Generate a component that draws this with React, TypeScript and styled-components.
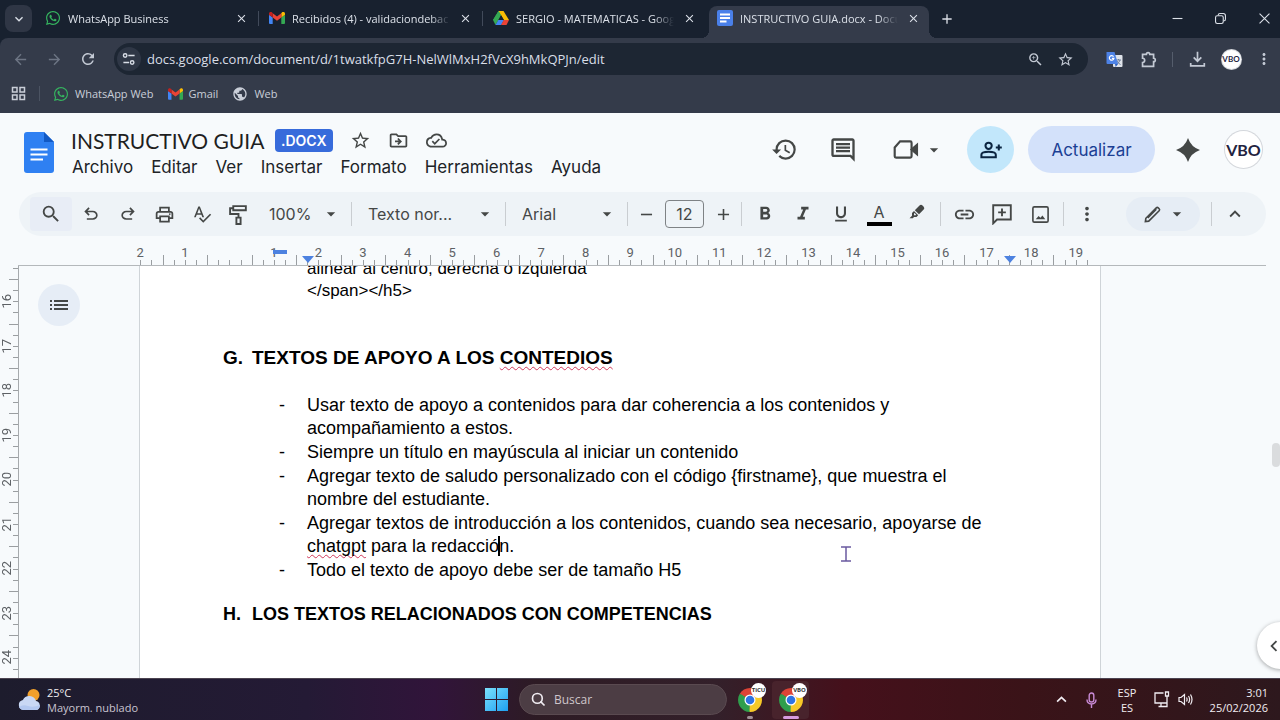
import React from "react";
import styled, { createGlobalStyle, css } from "styled-components";
import {
  MdHistory, MdOutlineInsertComment, MdSearch, MdOutlinePrint, MdSpellcheck,
  MdFormatBold, MdFormatItalic, MdFormatUnderlined, MdLink,
  MdMoreVert, MdExpandLess, MdStarBorder, MdOutlineDriveFileMove,
  MdOutlineCloudDone, MdZoomIn, MdRefresh, MdArrowBack, MdArrowForward, MdClose, MdAdd,
  MdRemove, MdArrowDropDown, MdExpandMore, MdPublic, MdChevronLeft,
} from "react-icons/md";
import { FaWhatsapp } from "react-icons/fa";

const ui = `"Open Sans", "Noto Sans", sans-serif`;
const docsUi = `Inter, Roboto, sans-serif`;
const paper = `"Liberation Sans", Arial, sans-serif`;

const Global = createGlobalStyle`
  * { box-sizing: border-box; }
  body { margin: 0; background: #f7fafc; font-family: ${ui}; }
  button { border: 0; background: none; padding: 0; margin: 0; font: inherit; color: inherit; display: inline-flex; align-items: center; justify-content: center; flex: none; }
  input, select { font: inherit; color: inherit; border: 0; background: none; padding: 0; margin: 0; outline: 0; min-width: 0; }
  a { color: inherit; text-decoration: none; }
  svg { display: block; flex: none; }
`;

const Screen = styled.div`
  min-height: 100vh;
  display: flex;
  flex-direction: column;
  overflow: hidden;
`;

/* ---------- browser chrome ---------- */
const Browser = styled.header`
  background: #18212f;
  color: #dbe0e8;
`;
const TabStrip = styled.div`
  height: 38px;
  display: flex;
  align-items: stretch;
  padding-left: 5px;
`;
const TabSearch = styled.button`
  width: 27px;
  height: 27px;
  margin: 5px 5px 0 0;
  border-radius: 8px;
  background: #2f3645;
`;
const Tabs = styled.div`
  display: flex;
  gap: 4px;
  flex: 0 1 892px;
  min-width: 0;
`;
const Tab = styled.div<{ $active?: boolean; $divider?: boolean }>`
  flex: 1 1 220px;
  min-width: 0;
  position: relative;
  display: flex;
  align-items: center;
  gap: 7px;
  margin-top: 6px;
  padding: 0 8px 8px;
  border-radius: 8px 8px 0 0;
  font-size: 11px;
  ${(p) => p.$active && css`
    background: #343b4a;
    &::before, &::after {
      content: "";
      position: absolute;
      bottom: 0;
      width: 8px;
      height: 8px;
    }
    &::before { left: -8px; background: radial-gradient(circle at 0 0, transparent 8px, #343b4a 8px); }
    &::after { right: -8px; background: radial-gradient(circle at 100% 0, transparent 8px, #343b4a 8px); }
  `}
  ${(p) => p.$divider && css`
    &::after {
      content: "";
      position: absolute;
      right: -2px;
      top: 5px;
      width: 1px;
      height: 15px;
      background: #414a5a;
    }
  `}
`;
const TabTitle = styled.span`
  flex: 1;
  min-width: 0;
  white-space: nowrap;
  overflow: hidden;
  mask-image: linear-gradient(90deg, #000 calc(100% - 20px), transparent);
`;
const TabClose = styled.button`
  width: 16px;
  height: 16px;
`;
const NewTab = styled.button`
  width: 28px;
  height: 28px;
  margin: 5px 0 0 4px;
`;
const WindowControls = styled.div`
  margin-left: auto;
  display: flex;
`;
const WindowButton = styled.button`
  width: 43px;
  height: 37px;
  &:last-child { width: 38px; padding-left: 6px; }
`;
const NavBar = styled.div`
  height: 42px;
  display: flex;
  align-items: center;
  background: #343b4a;
  border-radius: 8px 0 0 0;
  padding-left: 3px;
`;
const NavButton = styled.button<{ $dim?: boolean; $narrow?: boolean }>`
  width: ${(p) => (p.$narrow ? 32 : 34)}px;
  height: 32px;
  color: ${(p) => (p.$dim ? "#6d7584" : "#c3c9d4")};
`;
const AddressBar = styled.div`
  flex: 1;
  min-width: 0;
  height: 32px;
  margin: 0 9px;
  padding: 0 8px 0 3px;
  border-radius: 16px;
  background: #1d2633;
  display: flex;
  align-items: center;
  color: #d9dee7;
`;
const SiteInfo = styled.button`
  width: 24px;
  height: 24px;
  border-radius: 12px;
  background: #2f3746;
`;
const Url = styled.input`
  flex: 1;
  margin-left: 6px;
  font-size: 13px;
`;
const BarIcon = styled.button`
  width: 30px;
  height: 28px;
  color: #c3c9d4;
`;
const Rule = styled.span<{ $h: number; $m: number; $c: string }>`
  flex: none;
  width: 1px;
  height: ${(p) => p.$h}px;
  margin: 0 ${(p) => p.$m}px;
  background: ${(p) => p.$c};
`;
const Bookmarks = styled.nav`
  height: 33px;
  display: flex;
  align-items: center;
  background: #343b4a;
  padding: 0 0 6px 11px;
  font-size: 11px;
  color: #c9ced8;
`;
const Bookmark = styled.a`
  display: flex;
  align-items: center;
  gap: 6px;
  margin-right: 14px;
`;

/* ---------- docs header ---------- */
const Header = styled.section`
  height: 79px;
  display: flex;
  align-items: flex-start;
  padding: 13px 18px 0 24px;
  color: #202327;
  font-family: ${docsUi};
`;
const Logo = styled.a`
  margin-top: 6px;
`;
const TitleBlock = styled.div`
  margin-left: 17px;
  flex: 1;
  min-width: 0;
`;
const TitleRow = styled.div`
  height: 28px;
  display: flex;
  align-items: center;
  color: #444746;
`;
const Title = styled.input`
  width: 196px;
  font-size: 21px;
  color: #1f1f1f;
  font-family: Lato, sans-serif;
`;
const Badge = styled.span`
  height: 23px;
  padding: 0 6px;
  margin: 0 9px 0 8px;
  border-radius: 4px;
  background: #376bdb;
  color: #fff;
  font-size: 14px;
  font-weight: 600;
  line-height: 23px;
`;
const TitleIcon = styled.button`
  width: 38px;
  height: 28px;
`;
const MenuBar = styled.nav`
  display: flex;
  gap: 18px;
  padding-left: 1px;
  font-size: 17px;
  line-height: 26px;
`;
const HeaderActions = styled.div`
  height: 47px;
  display: flex;
  align-items: center;
  color: #444746;
`;
const ActionIcon = styled.button<{ $w: number }>`
  width: ${(p) => p.$w}px;
  height: 40px;
`;
const MeetButton = styled(ActionIcon)`
  gap: 5px;
  padding-left: 13px;
`;
const GeminiButton = styled(ActionIcon)`
  padding-right: 4px;
`;
const Share = styled.button`
  width: 47px;
  height: 47px;
  margin: 0 14px 0 16px;
  border-radius: 50%;
  background: #c2e7fb;
  color: #0b2540;
`;
const Upgrade = styled.button`
  height: 47px;
  width: 127px;
  border-radius: 24px;
  background: #d3e1fa;
  color: #1b3f94;
  font-size: 17px;
`;
const Avatar = styled.button<{ $size: number; $font: number }>`
  width: ${(p) => p.$size}px;
  height: ${(p) => p.$size}px;
  border-radius: 50%;
  background: #fff;
  box-shadow: 0 0 0 1px #d4d7dc;
  color: #23233f;
  font-family: Lato, sans-serif;
  font-weight: 700;
  font-size: ${(p) => p.$font}px;
`;

/* ---------- toolbar ---------- */
const ToolBar = styled.section`
  height: 44px;
  margin: 0 14px 0 19px;
  padding: 0 12px 0 11px;
  border-radius: 22px;
  background: #eef3f7;
  display: flex;
  align-items: center;
  color: #444746;
  font-family: ${docsUi};
  font-size: 16px;
`;
const Tool = styled.button<{ $w?: number; $shaded?: boolean }>`
  width: ${(p) => p.$w ?? 38}px;
  height: 34px;
  border-radius: 4px;
  background: ${(p) => (p.$shaded ? "#e8edf6" : "none")};
`;
const Picker = styled.label<{ $w: number }>`
  position: relative;
  width: ${(p) => p.$w}px;
  flex: none;
  select {
    width: 100%;
    height: 34px;
    appearance: none;
    padding-left: 12px;
  }
  svg {
    position: absolute;
    right: 6px;
    top: 7px;
    pointer-events: none;
  }
`;
const SizeBox = styled.input`
  width: 39px;
  height: 28px;
  margin: 0 5px;
  border: 1px solid #7e8285;
  border-radius: 4px;
  text-align: center;
`;
const TextColor = styled.span`
  width: 25px;
  height: 24px;
  border-bottom: 4px solid #000;
  line-height: 20px;
`;
const ModeButton = styled.button`
  width: 74px;
  height: 34px;
  margin: 0 7px 0 auto;
  border-radius: 17px;
  background: #e6edf5;
  gap: 5px;
  padding-left: 3px;
`;

/* ---------- rulers ---------- */
const RulerRow = styled.div`
  height: 30px;
  margin: 0 14px -1px 18px;
  padding-left: 100px;
  border-bottom: 1px solid #b4b8bb;
  position: relative;
  z-index: 1;
`;
const Ruler = styled.div`
  width: 980px;
  height: 29px;
  display: grid;
  grid-template-columns: repeat(22, 1fr);
`;
const RulerCell = styled.div`
  display: flex;
  flex-direction: column;
  justify-content: flex-end;
  font-family: Roboto, sans-serif;
  font-size: 13px;
  line-height: 14px;
  text-align: center;
  color: #5d6165;
  &:first-child i:nth-child(-n + 2) { border-color: transparent; }
`;
const Ticks = styled.div`
  height: 10px;
  margin-top: -5px;
  display: flex;
  align-items: flex-end;
  i { flex: 1; height: 5px; border-left: 1px solid #9a9ea1; }
  i:first-child { height: 10px; }
`;
const Marker = styled.svg`
  position: absolute;
  bottom: 2px;
`;
const Workspace = styled.main`
  position: relative;
  flex: 1 1 0;
  min-height: 400px;
  display: flex;
  overflow: hidden;
`;
const SideRuler = styled.div`
  flex: none;
  width: 19px;
  border-right: 1px solid #a6aaad;
  padding-top: 3px;
`;
const SideRulerInner = styled.div`
  height: 412px;
  display: grid;
  grid-template-rows: 11px repeat(9, 1fr);
  font-family: Roboto, sans-serif;
  font-size: 13px;
  color: #5d6165;
`;
const SideCell = styled.div`
  display: flex;
  justify-content: space-between;
  align-items: stretch;
`;
const SideLabel = styled.span`
  writing-mode: vertical-rl;
  transform: rotate(180deg);
  text-align: center;
  line-height: 14px;
  width: 14px;
`;
const SideTicks = styled.div`
  width: 9px;
  margin-left: -5px;
  display: flex;
  flex-direction: column;
  align-items: flex-end;
  i { flex: 1; width: 5px; border-top: 1px solid #9a9ea1; }
  i:first-child { width: 9px; }
`;
const FirstTick = styled.i`
  width: 5px;
  height: 1px;
  background: #9a9ea1;
  margin-left: auto;
`;
const Gutter = styled.aside`
  flex: none;
  width: 120px;
  padding: 19px 0 0 19px;
`;
const Outline = styled.button`
  width: 42px;
  height: 42px;
  border-radius: 21px;
  background: #e6edf6;
`;
const Page = styled.article`
  position: relative;
  flex: none;
  width: 962px;
  padding: 0 83px;
  background: #fff;
  border: solid #cfd4d8;
  border-width: 0 1px;
  color: #000;
  font-family: ${paper};
  font-size: 18px;
`;
const Continued = styled.p`
  margin: -7px 0 0 84px;
  font-size: 17px;
  line-height: 22px;
`;
const Heading = styled.h2<{ $size: number; $top: number }>`
  margin: ${(p) => p.$top}px 0 0;
  display: flex;
  font-size: ${(p) => p.$size}px;
  line-height: 24px;
  white-space: pre;
  span:first-child { width: 29px; }
`;
const List = styled.ul`
  list-style: none;
  margin: 24px 0 0;
  padding: 0 0 0 56px;
  line-height: 23px;
`;
const Item = styled.li`
  display: flex;
  margin-bottom: 1px;
  white-space: nowrap;
  &::before { content: "-"; width: 28px; flex: none; }
`;
const Typo = styled.u`
  text-decoration: underline wavy #d0385a 1px;
  text-underline-offset: 2px;
  text-decoration-skip-ink: none;
`;
const Caret = styled.span`
  display: inline-block;
  width: 2px;
  height: 20px;
  margin: 0 -1px;
  background: #000;
  vertical-align: -4px;
`;
const Pointer = styled.svg`
  position: absolute;
  left: 701px;
  top: 281px;
`;
const ScrollThumb = styled.span`
  position: absolute;
  right: 0;
  top: 178px;
  width: 8px;
  height: 24px;
  border-radius: 4px;
  background: #dadcde;
`;
const PanelToggle = styled.button`
  position: absolute;
  right: -24px;
  bottom: 9px;
  width: 47px;
  height: 47px;
  border-radius: 50%;
  background: #fff;
  box-shadow: 0 1px 4px rgba(0, 0, 0, 0.35);
  color: #444746;
  justify-content: flex-start;
  padding-left: 6px;
`;

/* ---------- taskbar ---------- */
const TaskBar = styled.footer`
  height: 42px;
  padding: 0 4px 0 18px;
  display: grid;
  grid-template-columns: 1fr auto 1fr;
  align-items: center;
  border-top: 1px solid #4b4350;
  background: linear-gradient(90deg, #1d1c2d 0%, #241a35 24%, #31143a 34%, #2d1b24 42%, #33202a 56%, #45101b 66%, #3a1318 80%, #2d181d 100%);
  color: #f1edf2;
  font-size: 12px;
  line-height: 15px;
`;
const Weather = styled.button`
  justify-self: start;
  gap: 6px;
  text-align: left;
  font-size: 11px;
  small { display: block; font-size: 11px; color: #c9c4d0; }
`;
const Center = styled.div`
  display: flex;
  align-items: center;
  height: 41px;
`;
const SearchBox = styled.label`
  width: 208px;
  height: 31px;
  margin: 0 4px 0 11px;
  padding-left: 11px;
  border-radius: 16px;
  background: #4c3d44;
  border: 1px solid #5a4a50;
  display: flex;
  align-items: center;
  gap: 8px;
  input { width: 150px; }
  input::placeholder { color: #cfc6ca; opacity: 1; }
`;
const TaskApp = styled.button<{ $active?: boolean }>`
  position: relative;
  width: 37px;
  height: 38px;
  margin-left: ${(p) => (p.$active ? 4 : 0)}px;
  border-radius: 4px;
  background: ${(p) => (p.$active ? "#48232c" : "none")};
  &::after {
    content: "";
    position: absolute;
    bottom: 0;
    left: calc(50% - ${(p) => (p.$active ? 8 : 3)}px);
    width: ${(p) => (p.$active ? 16 : 6)}px;
    height: 3px;
    border-radius: 2px;
    background: ${(p) => (p.$active ? "#d79be0" : "#a08f95")};
  }
`;
const AppBadge = styled.span`
  position: absolute;
  top: 2px;
  right: 2px;
  width: 15px;
  height: 15px;
  border-radius: 8px;
  background: #fff;
  color: #333;
  font-size: 6px;
  line-height: 15px;
  font-weight: 700;
`;
const Tray = styled.div`
  justify-self: end;
  display: flex;
  align-items: center;
  padding-right: 8px;
  font-size: 11px;
`;
const TrayButton = styled.button<{ $w: number; $right?: boolean }>`
  width: ${(p) => p.$w}px;
  text-align: ${(p) => (p.$right ? "right" : "center")};
  justify-content: ${(p) => (p.$right ? "flex-end" : "center")};
`;

/* ---------- drawings ---------- */
const GmailIcon = ({ w = 16 }: { w?: number }) => (
  <svg width={w} height="12" viewBox="0 0 16 12">
    <path d="M1 12h2.700V5.500L0 2.800V11q0 1 1 1z" fill="#4285f4" />
    <path d="M12.300 12H15q1 0 1-1V2.800l-3.700 2.700z" fill="#34a853" />
    <path d="M12.300 1.200v4.300L16 2.800V1.700C16 .2 14.300-.6 13.100.3z" fill="#fbbc04" />
    <path d="M3.700 5.500V1.200L8 4.400l4.300-3.200v4.300L8 8.700z" fill="#ea4335" />
    <path d="M0 1.700v1.100l3.700 2.700V1.200L2.900.3C1.700-.6 0 .2 0 1.700z" fill="#c5221f" />
  </svg>
);
const DriveIcon = () => (
  <svg width="16" height="14" viewBox="0 0 16 14">
    <path d="M5.500 0h5l-5.300 9H0z" fill="#34a853" />
    <path d="M10.500 0L16 9h-5L5.500 0z" fill="#fbbc04" />
    <path d="M0 9l2.500 5 3-5L8 4.200 5.500 0z" fill="#34a853" />
    <path d="M5.300 9H11l-2.800 5H2.500z" fill="#4285f4" />
    <path d="M10.700 9H16l-2.500 5H8z" fill="#ea4335" />
    <path d="M8 4.300L10.700 9H5.300z" fill="#18212f" />
  </svg>
);
const DocsTabIcon = () => (
  <svg width="16" height="16" viewBox="0 0 16 16">
    <rect width="16" height="16" rx="2" fill="#4a80ea" />
    <path d="M3 4.500h10M3 8h10M3 11.500h6.500" stroke="#fff" strokeWidth="1.800" />
  </svg>
);
const DocsLogo = () => (
  <svg width="30" height="41" viewBox="0 0 30 41">
    <path d="M3 0h17l10 10v28q0 3-3 3H3q-3 0-3-3V3q0-3 3-3z" fill="#2f80f2" />
    <path d="M20 0l10 10H20z" fill="#1259c4" />
    <path d="M6.500 17.500h17M6.500 22.500h17M6.500 27.500h12.500" stroke="#fff" strokeWidth="2.200" />
  </svg>
);
const Glyph = ({ d, size = 20 }: { d: string; size?: number }) => (
  <svg width={size} height={size} viewBox="0 -960 960 960" fill="currentColor"><path d={d} /></svg>
);
const UNDO = "M280-200v-80h284q63 0 109.500-40T720-420q0-60-46.500-100T564-560H312l104 104-56 56-200-200 200-200 56 56-104 104h252q97 0 166.500 63T800-420q0 94-69.500 157T564-200H280Z";
const REDO = "M396-200q-97 0-166.500-63T160-420q0-94 69.500-157T396-640h252L544-744l56-56 200 200-200 200-56-56 104-104H396q-63 0-109.500 40T240-420q0 60 46.500 100T396-280h284v80H396Z";
const Line = ({ d, size = 20, w = 2, children }: { d: string; size?: number; w?: number; children?: React.ReactNode }) => (
  <svg width={size} height={size} viewBox="0 0 20 20" fill="none" stroke="currentColor" strokeWidth={w}>
    <path d={d} />
    {children}
  </svg>
);
const TranslateIcon = () => (
  <svg width="17" height="17" viewBox="0 0 17 17">
    <rect x="7" y="4" width="9.500" height="12" rx="1" fill="#dfe3ea" />
    <path d="M10 9h5M12.500 8v1M14 9q-1 3-3.500 4.500M11 10q1 2.500 3.500 3.500" stroke="#6f7f9a" fill="none" />
    <path d="M1 1h7.500l3.500 12H1.500Q.5 13 .5 12V1.500z" fill="#4d82e6" />
    <path d="M7.600 5.600A2.300 2.300 0 1 0 7.900 7.400H5.900" stroke="#fff" strokeWidth="1.200" fill="none" />
    <path d="M9 13h3l-2.300 3z" fill="#2d5fc0" />
  </svg>
);
const ChromeIcon = () => (
  <svg width="24" height="24" viewBox="0 0 24 24">
    <path d="M12 12L1.610 6A12 12 0 0 1 22.390 6z" fill="#dd4336" />
    <path d="M12 12L22.390 6A12 12 0 0 1 12 24z" fill="#f7c928" />
    <path d="M12 12v12A12 12 0 0 1 1.610 6z" fill="#2f9e4c" />
    <path d="M12 6.500h10.650L12 12z" fill="#dd4336" />
    <path d="M16.760 14.750L11.500 24 12 12z" fill="#f7c928" />
    <path d="M7.240 14.750L1.900 5.500 12 12z" fill="#2f9e4c" />
    <circle cx="12" cy="12" r="5.500" fill="#fff" />
    <circle cx="12" cy="12" r="4.300" fill="#2f74e4" />
  </svg>
);
const WeatherIcon = () => (
  <svg width="23" height="24" viewBox="0 0 23 24">
    <circle cx="15.500" cy="7" r="6" fill="#f2a02b" />
    <path d="M5.500 22a5 5 0 0 1-.6-9.900A7 7 0 0 1 18 13a4.600 4.600 0 0 1 .3 9z" fill="#c9d8f4" />
    <path d="M1 19q4-3 9-1t12-1q-.5 5-4 5H5.500Q2.500 22 1 19z" fill="#b3c8f0" />
  </svg>
);
const WindowsLogo = () => (
  <svg width="23" height="23" viewBox="0 0 23 23">
    <defs><linearGradient id="win" x1="0" y1="0" x2="1" y2="1"><stop stopColor="#7be0fb" /><stop offset="1" stopColor="#1ea0f2" /></linearGradient></defs>
    <path d="M0 0h11v11H0zM12 0h11v11H12zM0 12h11v11H0zM12 12h11v11H12z" fill="url(#win)" />
  </svg>
);

const tabs = [
  { title: "WhatsApp Business", icon: <FaWhatsapp size={16} color="#35b45f" /> },
  { title: "Recibidos (4) - validaciondebac", icon: <GmailIcon /> },
  { title: "SERGIO - MATEMATICAS - Goog", icon: <DriveIcon /> },
  { title: "INSTRUCTIVO GUIA.docx - Docu", icon: <DocsTabIcon />, active: true },
];
const menus = ["Archivo", "Editar", "Ver", "Insertar", "Formato", "Herramientas", "Ayuda"];
const rulerLabels = ["2", "1", "", ...Array.from({ length: 19 }, (_, i) => String(i + 1))];
const sideLabels = ["16", "17", "18", "19", "20", "21", "22", "23", "24"];

const ToolRule = () => <Rule $h={24} $m={4} $c="#c9cdd1" />;
const FourTicks = () => (<><i /><i /><i /><i /></>);

export default function App() {
  return (
    <Screen>
      <Global />
      <Browser>
        <TabStrip>
          <TabSearch aria-label="Buscar pestañas"><MdExpandMore size={16} /></TabSearch>
          <Tabs>
            {tabs.map((t, i) => (
              <Tab key={t.title} $active={t.active} $divider={i < 2}>
                {t.icon}
                <TabTitle>{t.title}</TabTitle>
                <TabClose aria-label="Cerrar"><MdClose size={13} /></TabClose>
              </Tab>
            ))}
          </Tabs>
          <NewTab aria-label="Nueva pestaña"><MdAdd size={16} /></NewTab>
          <WindowControls>
            <WindowButton aria-label="Minimizar"><Line size={11} d="M1 10h18" /></WindowButton>
            <WindowButton aria-label="Restaurar">
              <Line size={11} w={2} d="M6 4V3q0-2 3-2h6q4 0 4 4v6q0 3-2 3h-1"><rect x="1" y="5" width="14" height="14" rx="3" /></Line>
            </WindowButton>
            <WindowButton aria-label="Cerrar ventana"><Line size={11} d="M1 1l18 18M19 1L1 19" /></WindowButton>
          </WindowControls>
        </TabStrip>
        <NavBar>
          <NavButton $dim aria-label="Atrás"><MdArrowBack size={17} /></NavButton>
          <NavButton $dim aria-label="Adelante"><MdArrowForward size={17} /></NavButton>
          <NavButton aria-label="Recargar"><MdRefresh size={18} /></NavButton>
          <AddressBar>
            <SiteInfo aria-label="Información del sitio">
              <Line size={14} w={2} d="M9 5h9M2 15h8"><circle cx="4.500" cy="5" r="2.500" /><circle cx="14.500" cy="15" r="2.500" /></Line>
            </SiteInfo>
            <Url aria-label="Dirección" defaultValue="docs.google.com/document/d/1twatkfpG7H-NelWlMxH2fVcX9hMkQPJn/edit" />
            <BarIcon aria-label="Zoom"><MdZoomIn size={17} /></BarIcon>
            <BarIcon aria-label="Añadir a marcadores"><MdStarBorder size={17} /></BarIcon>
          </AddressBar>
          <NavButton aria-label="Traducir"><TranslateIcon /></NavButton>
          <NavButton aria-label="Extensiones">
            <Line size={17} d="M3 4h4.500a2 2 0 0 1 4 0H16v4.500a2 2 0 0 1 0 4V18H3v-4.500a2.500 2.500 0 0 0 0-5z" />
          </NavButton>
          <Rule $h={15} $m={7} $c="#555d6c" />
          <NavButton aria-label="Descargas"><Line size={17} d="M10 1v11M5.500 7.500L10 12l4.500-4.500M2 14v3.500h16V14" /></NavButton>
          <NavButton aria-label="Perfil"><Avatar as="span" $size={19} $font={8}><AvatarText>VBO</AvatarText></Avatar></NavButton>
          <NavButton $narrow aria-label="Más"><MdMoreVert size={18} /></NavButton>
        </NavBar>
        <Bookmarks>
          <button aria-label="Grupos">
            <Line size={15} w={2} d="M2 2h6v6H2zM12 2h6v6h-6zM2 12h6v6H2zM12 12h6v6h-6z" />
          </button>
          <Rule $h={15} $m={13} $c="#4b5362" />
          <Bookmark href="#whatsapp"><FaWhatsapp size={16} color="#35b45f" />WhatsApp Web</Bookmark>
          <Bookmark href="#gmail"><GmailIcon w={15} />Gmail</Bookmark>
          <Bookmark href="#web"><MdPublic size={16} />Web</Bookmark>
        </Bookmarks>
      </Browser>

      <Header>
        <Logo href="#inicio" aria-label="Página principal de Documentos"><DocsLogo /></Logo>
        <TitleBlock>
          <TitleRow>
            <Title aria-label="Nombre del documento" defaultValue="INSTRUCTIVO GUIA" />
            <Badge>.DOCX</Badge>
            <TitleIcon aria-label="Destacar"><MdStarBorder size={21} /></TitleIcon>
            <TitleIcon aria-label="Mover"><MdOutlineDriveFileMove size={21} /></TitleIcon>
            <TitleIcon aria-label="Estado del documento"><MdOutlineCloudDone size={21} /></TitleIcon>
          </TitleRow>
          <MenuBar>{menus.map((m) => <button key={m}>{m}</button>)}</MenuBar>
        </TitleBlock>
        <HeaderActions>
          <ActionIcon $w={59} aria-label="Historial"><MdHistory size={27} /></ActionIcon>
          <ActionIcon $w={58} aria-label="Comentarios"><MdOutlineInsertComment size={28} /></ActionIcon>
          <MeetButton $w={79} aria-label="Videollamada">
            <Line size={27} w={1.600} d="M2 8.500L6 4h7.500q1 0 1 1v10q0 1-1 1H3q-1 0-1-1z"><path d="M14.500 10L18.500 6.500v7z" fill="currentColor" /></Line>
            <MdArrowDropDown size={20} />
          </MeetButton>
          <Share aria-label="Compartir">
            <Line size={24} w={1.700} d="M2 16v-2q0-2.500 6-2.500t6 2.500v2zM16.500 5.500v5M14 8h5"><circle cx="8" cy="6.500" r="2.600" /></Line>
          </Share>
          <Upgrade>Actualizar</Upgrade>
          <GeminiButton $w={70} aria-label="Gemini">
            <svg width="24" height="24" viewBox="0 0 24 24" fill="currentColor"><path d="M12 0q3 9 12 12-9 3-12 12-3-9-12-12Q9 9 12 0z" /></svg>
          </GeminiButton>
          <Avatar $size={37} $font={16} aria-label="Cuenta">VBO</Avatar>
        </HeaderActions>
      </Header>

      <ToolBar>
        <Tool $w={42} $shaded aria-label="Buscar"><MdSearch size={22} /></Tool>
        <Tool $w={37} aria-label="Deshacer"><Glyph d={UNDO} /></Tool>
        <Tool $w={37} aria-label="Rehacer"><Glyph d={REDO} /></Tool>
        <Tool $w={37} aria-label="Imprimir"><MdOutlinePrint size={21} /></Tool>
        <Tool $w={37} aria-label="Ortografía"><MdSpellcheck size={20} /></Tool>
        <Tool $w={37} aria-label="Copiar formato">
          <Line size={21} w={1.800} d="M5 2h12v4H5zM5 4H2v5.500h8V13"><path d="M8 13h4v6H8z" /></Line>
        </Tool>
        <Picker $w={90}><select aria-label="Zoom"><option>100%</option></select><MdArrowDropDown size={20} /></Picker>
        <ToolRule />
        <Picker $w={145}><select aria-label="Estilos"><option>Texto nor...</option></select><MdArrowDropDown size={20} /></Picker>
        <ToolRule />
        <Picker $w={113}><select aria-label="Fuente"><option>Arial</option></select><MdArrowDropDown size={20} /></Picker>
        <ToolRule />
        <Tool $w={28} aria-label="Reducir"><MdRemove size={19} /></Tool>
        <SizeBox aria-label="Tamaño de fuente" defaultValue="12" />
        <Tool $w={28} aria-label="Aumentar"><MdAdd size={19} /></Tool>
        <ToolRule />
        <Tool aria-label="Negrita"><MdFormatBold size={22} /></Tool>
        <Tool aria-label="Cursiva"><MdFormatItalic size={22} /></Tool>
        <Tool aria-label="Subrayado"><MdFormatUnderlined size={20} /></Tool>
        <Tool aria-label="Color del texto"><TextColor>A</TextColor></Tool>
        <Tool aria-label="Resaltar">
          <svg width="18" height="22" viewBox="0 0 18 22" fill="currentColor"><path d="M11.500 2.500Q13 1 14.500 2.500l1.200 1.200q1.300 1.400 0 2.800L11 11.200 6.800 7.200zM6 8l4.200 4.200L8.500 14H6l-1.200 1.200H1.500L4 12.700V10z" /><path d="M6 10.500v1.700h1.600l.6-.5-1.600-1.700z" fill="#eef3f7" /></svg>
        </Tool>
        <ToolRule />
        <Tool aria-label="Enlace"><MdLink size={23} /></Tool>
        <Tool aria-label="Añadir comentario">
          <Line size={22} w={1.700} d="M2 18.500V2h16v13H5.500zM10 5v7M6.500 8.500h7" />
        </Tool>
        <Tool aria-label="Imagen">
          <Line size={19} w={1.700} d="M3.500 2h13q1.500 0 1.500 1.500v13q0 1.500-1.500 1.500h-13Q2 18 2 16.500v-13Q2 2 3.500 2z">
            <path d="M5 15l3-3.500 2 2 2-2.500 3 4z" fill="currentColor" stroke="none" />
          </Line>
        </Tool>
        <ToolRule />
        <Tool aria-label="Más"><MdMoreVert size={22} /></Tool>
        <ModeButton aria-label="Modo de edición">
          <Line size={19} w={1.700} d="M2.500 17.500l.5-3.500L14 3q1-1 2 0l1 1q1 1 0 2L6 17zM5 13.500L14 4.500" />
          <MdArrowDropDown size={20} />
        </ModeButton>
        <ToolRule />
        <Tool aria-label="Ocultar menús"><MdExpandLess size={22} /></Tool>
      </ToolBar>

      <RulerRow>
        <Ruler>
          {rulerLabels.map((n, i) => (
            <RulerCell key={i}>{n}<Ticks><FourTicks /></Ticks></RulerCell>
          ))}
        </Ruler>
        <Marker width="14" height="4" viewBox="0 0 14 4" style={{ left: 255, bottom: 11 }}><path d="M0 0h14v4H0z" fill="#4d82e0" /></Marker>
        <Marker width="12" height="7" viewBox="0 0 12 7" style={{ left: 284 }}><path d="M0 0h12L6 7z" fill="#4d82e0" /></Marker>
        <Marker width="12" height="7" viewBox="0 0 12 7" style={{ left: 986 }}><path d="M0 0h12L6 7z" fill="#4d82e0" /></Marker>
      </RulerRow>

      <Workspace>
        <SideRuler>
          <SideRulerInner>
            <FirstTick />
            {sideLabels.map((n) => (
              <SideCell key={n}><SideLabel>{n}</SideLabel><SideTicks><FourTicks /></SideTicks></SideCell>
            ))}
          </SideRulerInner>
        </SideRuler>
        <Gutter>
          <Outline aria-label="Mostrar esquema">
            <svg width="18" height="12" viewBox="0 0 18 12" stroke="#444746" strokeWidth="2">
              <path d="M4 2h14M4 6h14M4 10h14M0 2h2M0 6h2M0 10h2" />
            </svg>
          </Outline>
        </Gutter>
        <Page>
          <Continued>alinear al centro, derecha o izquierda<br />&lt;/span&gt;&lt;/h5&gt;</Continued>
          <Heading $size={19} $top={44}><span>G.</span><span>TEXTOS DE APOYO A LOS <Typo>CONTEDIOS</Typo></span></Heading>
          <List>
            <Item><span>Usar texto de apoyo a contenidos para dar coherencia a los contenidos y<br />acompañamiento a estos.</span></Item>
            <Item><span>Siempre un título en mayúscula al iniciar un contenido</span></Item>
            <Item><span>Agregar texto de saludo personalizado con el código {"{firstname}"}, que muestra el<br />nombre del estudiante.</span></Item>
            <Item><span>Agregar textos de introducción a los contenidos, cuando sea necesario, apoyarse de<br /><Typo>chatgpt</Typo> para la redacció<Caret />n.</span></Item>
            <Item><span>Todo el texto de apoyo debe ser de tamaño H5</span></Item>
          </List>
          <Heading $size={18} $top={20}><span>H.</span><span>LOS TEXTOS RELACIONADOS CON COMPETENCIAS</span></Heading>
          <Pointer width="10" height="16" viewBox="0 0 10 16" fill="none" stroke="#6a5aa0" strokeWidth="1.500">
            <path d="M0 1h10M0 15h10M5 1v14" />
          </Pointer>
        </Page>
        <ScrollThumb />
        <PanelToggle aria-label="Mostrar panel lateral"><MdChevronLeft size={22} /></PanelToggle>
      </Workspace>

      <TaskBar>
        <Weather><WeatherIcon /><span>25°C<small>Mayorm. nublado</small></span></Weather>
        <Center>
          <button aria-label="Inicio"><WindowsLogo /></button>
          <SearchBox>
            <Line size={15} w={2.200} d="M12.500 12.500L18 18"><circle cx="8.500" cy="8.500" r="6.500" /></Line>
            <input placeholder="Buscar" aria-label="Buscar" />
          </SearchBox>
          <TaskApp aria-label="Chrome"><ChromeIcon /><AppBadge>TiCU</AppBadge></TaskApp>
          <TaskApp $active aria-label="Chrome VBO"><ChromeIcon /><AppBadge>VBO</AppBadge></TaskApp>
        </Center>
        <Tray>
          <TrayButton $w={30} aria-label="Iconos ocultos"><Line size={11} w={3} d="M2 14l8-8 8 8" /></TrayButton>
          <TrayButton $w={30} aria-label="Micrófono">
            <svg width="11" height="16" viewBox="0 0 11 16" fill="none" stroke="#c98bd6" strokeWidth="1.400"><rect x="3.200" y="1" width="4.600" height="9" rx="2.300" /><path d="M1 7.500q0 4.500 4.500 4.500T10 7.500M5.500 12v4" /></svg>
          </TrayButton>
          <TrayButton $w={42}>ESP<br />ES</TrayButton>
          <TrayButton $w={28} aria-label="Red">
            <svg width="16" height="17" viewBox="0 0 16 17" fill="none" stroke="#f1edf2" strokeWidth="1.300"><path d="M9.500 2H1v10h12V9M4.500 15.500h5M7 12v3.500M11.500 1h3v4h-3zM13 5v10.500H9" /></svg>
          </TrayButton>
          <TrayButton $w={18} aria-label="Volumen">
            <svg width="15" height="13" viewBox="0 0 15 13" fill="none" stroke="#f1edf2" strokeWidth="1.200"><path d="M1 4.500h2L6.500 1.500v10L3 8.500H1zM8.500 4.500q1.200 2 0 4M10.500 3q2.200 3.500 0 7M12.500 1.500q3 5 0 10" /></svg>
          </TrayButton>
          <TrayButton $w={74} $right>3:01<br />25/02/2026</TrayButton>
        </Tray>
      </TaskBar>
    </Screen>
  );
}

const AvatarText = styled.span`
  display: block;
  width: 19px;
  line-height: 19px;
  text-align: center;
`;
